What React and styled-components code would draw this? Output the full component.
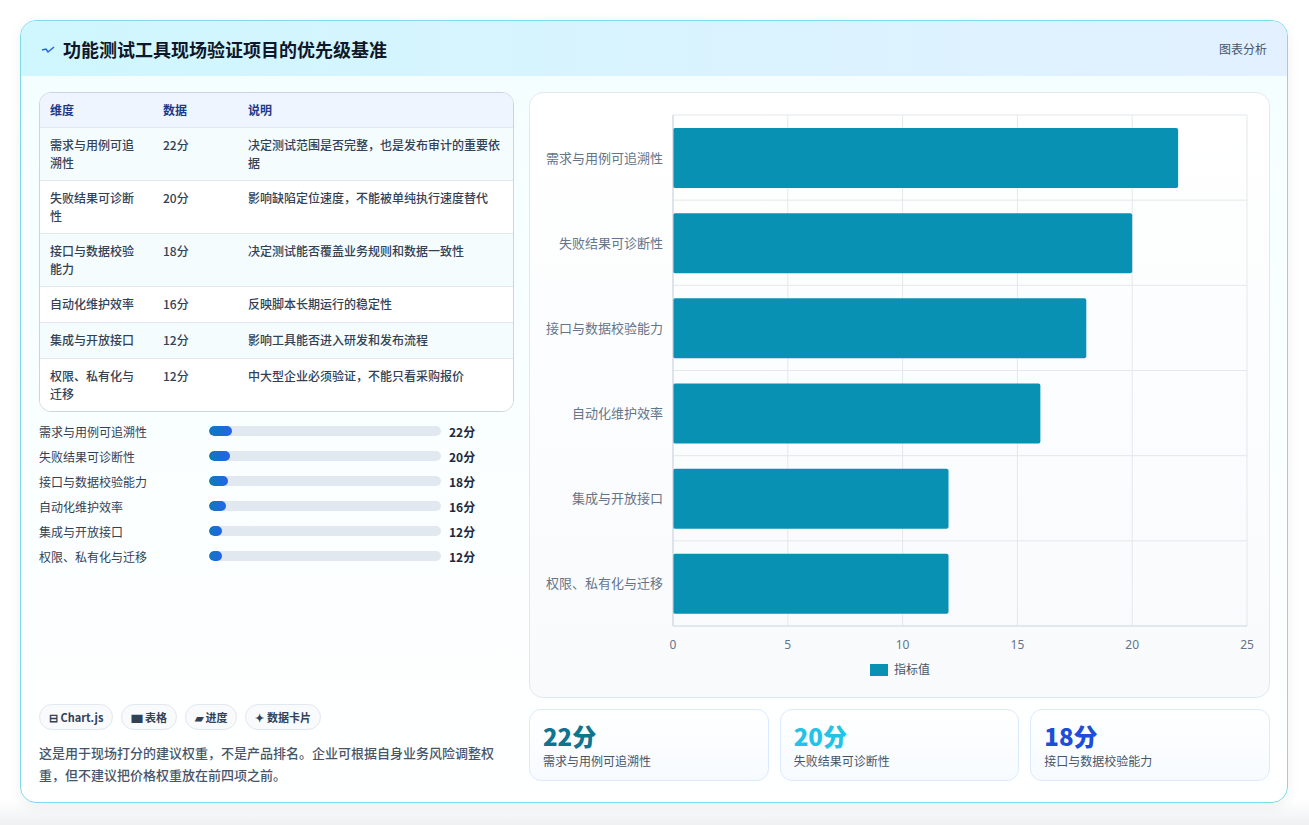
import React from "react";
import styled, { createGlobalStyle } from "styled-components";

const G = createGlobalStyle`
  body{margin:0;background:#f4f6f8;font-family:"Noto Sans CJK SC","Noto Sans",sans-serif;}
`;
const Page = styled.div`padding:20px 21px 22px 20px;height:825px;box-sizing:border-box;background:linear-gradient(#fff 0,#fff 97%,#eef0f2 100%);`;
const Card = styled.div`border:1px solid #7fdbe6;border-radius:16px;background:linear-gradient(180deg,#f4feff,#fff);height:783px;box-sizing:border-box;overflow:hidden;box-shadow:0 4px 14px rgba(0,0,0,.06);display:flex;flex-direction:column;`;
const Header = styled.div`height:55px;background:linear-gradient(90deg,#cff7fd,#e2f0ff);display:flex;align-items:center;justify-content:space-between;padding:0 20px;`;
const Title = styled.h1`margin:0;font-size:18px;font-weight:700;color:#0f172a;display:flex;align-items:center;gap:8px;`;
const Tag = styled.span`font-size:12px;color:#475569;`;
const Body = styled.div`flex:1;display:grid;grid-template-columns:475px 741px;gap:15px;padding:16px 18px 16px 18px;`;
const Left = styled.div`display:flex;flex-direction:column;`;
const Table = styled.div`border:1px solid #cbd5e1;border-radius:12px;overflow:hidden;background:#fff;`;
const Row = styled.div`display:grid;grid-template-columns:113px 85px 1fr;padding:${p=>p.h?"8px 10px":"8px 10px"};min-height:${p=>p.h?"17px":"19px"};border-top:${p=>p.h?"none":"1px solid #e2e8f0"};background:${p=>p.h?"#eef5ff":p.alt?"#f5fcfd":"#fff"};font-size:12px;line-height:18px;color:${p=>p.h?"#1e3a8a":"#334155"};font-weight:${p=>p.h?700:500};align-items:start;`;
const Bars = styled.div`display:flex;flex-direction:column;gap:7px;margin-top:10px;`;
const BarRow = styled.div`display:grid;grid-template-columns:170px 232px 1fr;gap:0;align-items:center;font-size:12px;color:#334155;height:18px;`;
const Track = styled.div`height:10px;border-radius:5px;background:#e2e8f0;overflow:hidden;`;
const Fill = styled.div`height:100%;border-radius:5px;background:linear-gradient(90deg,#0e7ab8,#2563eb);`;
const Val = styled.span`padding-left:8px;font-weight:700;color:#1e293b;`;
const Chips = styled.div`display:flex;gap:8px;margin-top:auto;`;
const Chip = styled.span`border:1px solid #e2e8f0;background:#f8fafc;border-radius:14px;padding:4px 9px;font-size:11px;font-weight:700;color:#334155;`;
const Note = styled.p`margin:12px 0 0;font-size:13px;line-height:22px;color:#475569;font-weight:500;`;
const Right = styled.div`display:flex;flex-direction:column;gap:11px;`;
const ChartBox = styled.div`border:1px solid #e2e8f0;border-radius:14px;background:linear-gradient(#fff,#f8fafc);height:606px;box-sizing:border-box;`;
const Stats = styled.div`display:grid;grid-template-columns:repeat(3,1fr);gap:11px;`;
const Stat = styled.div`border:1px solid #dbeafe;border-radius:12px;background:linear-gradient(#fff,#f7fbff);padding:10px 13px;height:72px;box-sizing:border-box;`;
const Big = styled.div`font-size:24px;font-weight:800;color:${p=>p.c};line-height:32px;`;
const Small = styled.div`font-size:12px;color:#475569;`;

const data=[["需求与用例可追溯性",22,"决定测试范围是否完整，也是发布审计的重要依据"],["失败结果可诊断性",20,"影响缺陷定位速度，不能被单纯执行速度替代"],["接口与数据校验能力",18,"决定测试能否覆盖业务规则和数据一致性"],["自动化维护效率",16,"反映脚本长期运行的稳定性"],["集成与开放接口",12,"影响工具能否进入研发和发布流程"],["权限、私有化与迁移",12,"中大型企业必须验证，不能只看采购报价"]];
const tnames=["需求与用例可追\n溯性","失败结果可诊断\n性","接口与数据校验\n能力","自动化维护效率","集成与开放接口","权限、私有化与\n迁移"];

function Chart(){
  const x0=143,w=574,y0=22,h=511,step=h/6;
  return <svg width="741" height="606" style={{display:"block"}}>
    {[0,5,10,15,20,25].map((t,i)=><g key={t}><line x1={x0+i*w/5} x2={x0+i*w/5} y1={y0} y2={y0+h} stroke="#e5e7eb"/><text x={x0+i*w/5} y={y0+h+23} fontSize="12" fill="#64748b" textAnchor="middle" fontFamily="Noto Sans">{t}</text></g>)}
    {data.map((d,i)=><g key={i}><line x1={x0} x2={x0+w} y1={y0+i*step} y2={y0+i*step} stroke="#e5e7eb"/>
      <rect x={x0} y={y0+i*step+13} width={d[1]*w/25} height={60} fill="#0891b2" rx="2"/>
      <text x={x0-10} y={y0+i*step+step/2+5} fontSize="13" fill="#64748b" textAnchor="end">{d[0]}</text></g>)}
    <line x1={x0} x2={x0+w} y1={y0+h} y2={y0+h} stroke="#cbd5e1"/>
    <line x1={x0} x2={x0} y1={y0} y2={y0+h} stroke="#cbd5e1"/>
    <rect x="340" y="571" width="18" height="12" fill="#0891b2"/>
    <text x="364" y="581" fontSize="12" fill="#475569">指标值</text>
  </svg>;
}

export default function App(){
  return <Page><G/><Card>
    <Header><Title><svg width="14" height="10" viewBox="0 0 14 10"><path d="M1 6 L5 5 L7 8 L13 3" stroke="#2563eb" strokeWidth="1.5" fill="none"/></svg>功能测试工具现场验证项目的优先级基准</Title><Tag>图表分析</Tag></Header>
    <Body>
      <Left>
        <Table>
          <Row h><span>维度</span><span>数据</span><span>说明</span></Row>
          {data.map((d,i)=><Row key={i} alt={i%2===0}><span style={{whiteSpace:"pre-line"}}>{tnames[i]}</span><span>{d[1]}分</span><span>{d[2]}</span></Row>)}
        </Table>
        <Bars>{data.map((d,i)=><BarRow key={i}><span>{d[0]}</span><Track><Fill style={{width:`${d[1]/2.2}%`}}/></Track><Val>{d[1]}分</Val></BarRow>)}</Bars>
        <Chips><Chip>⊟ Chart.js</Chip><Chip>▆ 表格</Chip><Chip>▰ 进度</Chip><Chip>✦ 数据卡片</Chip></Chips>
        <Note>这是用于现场打分的建议权重，不是产品排名。企业可根据自身业务风险调整权重，但不建议把价格权重放在前四项之前。</Note>
      </Left>
      <Right>
        <ChartBox><Chart/></ChartBox>
        <Stats>
          <Stat><Big c="#0e7490">22分</Big><Small>需求与用例可追溯性</Small></Stat>
          <Stat><Big c="#22c3e6">20分</Big><Small>失败结果可诊断性</Small></Stat>
          <Stat><Big c="#1d4ed8">18分</Big><Small>接口与数据校验能力</Small></Stat>
        </Stats>
      </Right>
    </Body>
  </Card></Page>;
}
